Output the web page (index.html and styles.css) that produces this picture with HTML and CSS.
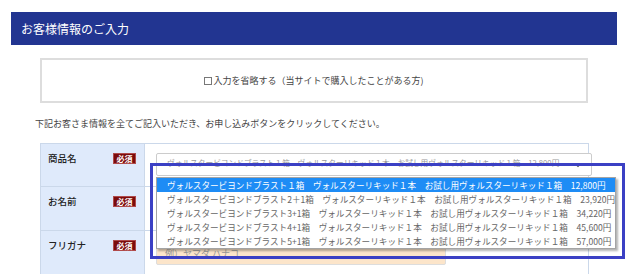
FILE: index.html
```html
<!DOCTYPE html>
<html lang="ja">
<head>
  <meta charset="UTF-8" />
  <title>お客様情報のご入力</title>
  <link rel="stylesheet" href="styles.css">
</head>
<body>
  <div class="page">
    <h2 class="section-title">お客様情報のご入力</h2>

    <div class="skip-box">
      <span class="check"></span>入力を省略する（当サイトで購入したことがある方)
    </div>

    <p class="lead">下記お客さま情報を全てご記入いただき、お申し込みボタンをクリックしてください。</p>

    <div class="form-table">
      <div class="row">
        <div class="label"><span>商品名</span><span class="req">必須</span></div>
        <div class="field">
          <div class="select-wrap">
            <div class="select">
              <span class="select-text">ヴォルスタービヨンドブラスト１箱　ヴォルスターリキッド１本　お試し用ヴォルスターリキッド１箱　12,800円</span>
              <svg class="arrow" width="8" height="6" viewBox="0 0 8 6"><path d="M1 1.5 L4 4.5 L7 1.5" fill="none" stroke="#555" stroke-width="1.2"/></svg>
            </div>
            <ul class="dropdown">
              <li class="selected">ヴォルスタービヨンドブラスト１箱　ヴォルスターリキッド１本　お試し用ヴォルスターリキッド１箱　12,800円</li>
              <li>ヴォルスタービヨンドブラスト2＋1箱　ヴォルスターリキッド１本　お試し用ヴォルスターリキッド１箱　23,920円</li>
              <li>ヴォルスタービヨンドブラスト3+1箱　ヴォルスターリキッド１本　お試し用ヴォルスターリキッド１箱　34,220円</li>
              <li>ヴォルスタービヨンドブラスト4+1箱　ヴォルスターリキッド１本　お試し用ヴォルスターリキッド１箱　45,600円</li>
              <li>ヴォルスタービヨンドブラスト5+1箱　ヴォルスターリキッド１本　お試し用ヴォルスターリキッド１箱　57,000円</li>
            </ul>
            <div class="highlight"></div>
          </div>
        </div>
      </div>
      <div class="row">
        <div class="label"><span>お名前</span><span class="req">必須</span></div>
        <div class="field field-input">
          <div class="input"></div>
        </div>
      </div>
      <div class="row">
        <div class="label"><span>フリガナ</span><span class="req">必須</span></div>
        <div class="field field-input">
          <div class="input">例）ヤマダ ハナコ</div>
        </div>
      </div>
    </div>
  </div>
</body>
</html>
```

FILE: styles.css
```css
:root {
  --navy: #223591;
  --label-bg: #dfeafb;
  --line: #cbd8ea;
  --text: #333333;
  --muted: #999999;
  --req: #7b0c0c;
  --input-bg: #fce5ca;
  --pick: #1e8cf5;
  --mark: #3b40c4;
}

body {
  margin: 0;
  background: #ffffff;
  color: var(--text);
  font-family: "Noto Sans CJK JP", "Noto Sans", sans-serif;
  font-size: 9px;
}

.page {
  padding-top: 12px;
  width: 640px;
  overflow: hidden;
  height: 274px;
}

.section-title {
  margin: 0 0 0 11px;
  width: 596px;
  height: 33px;
  padding-left: 10px;
  background: var(--navy);
  color: #ffffff;
  font-size: 12px;
  font-weight: normal;
  line-height: 33px;
}

.skip-box {
  margin: 13px 0 0 40px;
  width: 544px;
  height: 41px;
  border: 2px solid #dddddd;
  display: flex;
  align-items: center;
  justify-content: center;
  line-height: 1;
  color: #444444;
}

.check {
  display: inline-block;
  width: 6px;
  height: 6px;
  border: 1px solid #777777;
  margin-right: 1px;
}

.lead {
  margin: 14px 0 0 35px;
  line-height: 14px;
  color: #444444;
}

.form-table {
  margin: 12px 0 0 40px;
  width: 547px;
  border: 1px solid var(--line);
}

.row {
  display: grid;
  grid-template-columns: 104px 1fr;
  height: 43px;
  border-top: 1px solid var(--line);
}
.row:first-child { border-top: none; height: 42px; }

.label {
  background: var(--label-bg);
  border-right: 1px solid var(--line);
  display: flex;
  justify-content: space-between;
  align-items: flex-start;
  padding: 9px 8px 0 7px;
  font-size: 9.5px;
  font-weight: 500;
  line-height: 11px;
  color: #222222;
}

.req {
  width: 21px;
  height: 9px;
  border: 1px solid #b04a4a;
  background: var(--req);
  color: #ffffff;
  font-size: 8px;
  font-weight: bold;
  line-height: 9px;
  text-align: center;
}

.field { padding: 9px 0 0 11px; }
.field-input { padding-top: 11px; }

.select-wrap {
  position: relative;
  width: 436px;
}

.select {
  height: 21px;
  border: 1px solid #cccccc;
  border-radius: 2px;
  display: flex;
  align-items: flex-start;
  justify-content: space-between;
  padding: 4px 9px 0 10px;
  box-sizing: border-box;
  height: 23px;
  background: #ffffff;
  font-size: 7.7px;
}

.select-text {
  color: var(--muted);
  white-space: nowrap;
  overflow: hidden;
  width: 405px;
  line-height: 9px;
}

.arrow {
  flex-shrink: 0;
  margin-top: 4px;
}

.dropdown {
  position: absolute;
  top: 24px;
  left: 0;
  width: 458px;
  margin: 0;
  padding: 0;
  list-style: none;
  background: #ffffff;
  border: 1px solid #a4a4a4;
  box-shadow: 2px 2px 2px rgba(0, 0, 0, 0.3);
  font-size: 8.6px;
  z-index: 2;
}
.dropdown li {
  height: 14px;
  line-height: 14px;
  padding-left: 10px;
  white-space: nowrap;
  color: #666666;
}
.dropdown li.selected {
  background: var(--pick);
  color: #ffffff;
}

.highlight {
  position: absolute;
  top: 10px;
  left: -6px;
  width: 469px;
  height: 90px;
  border: 3px solid var(--mark);
  z-index: 3;
}

.input {
  width: 280px;
  height: 21px;
  border: 1px solid #dddddd;
  border-radius: 2px;
  background: var(--input-bg);
  padding-left: 8px;
  line-height: 21px;
  color: var(--muted);
}
```
